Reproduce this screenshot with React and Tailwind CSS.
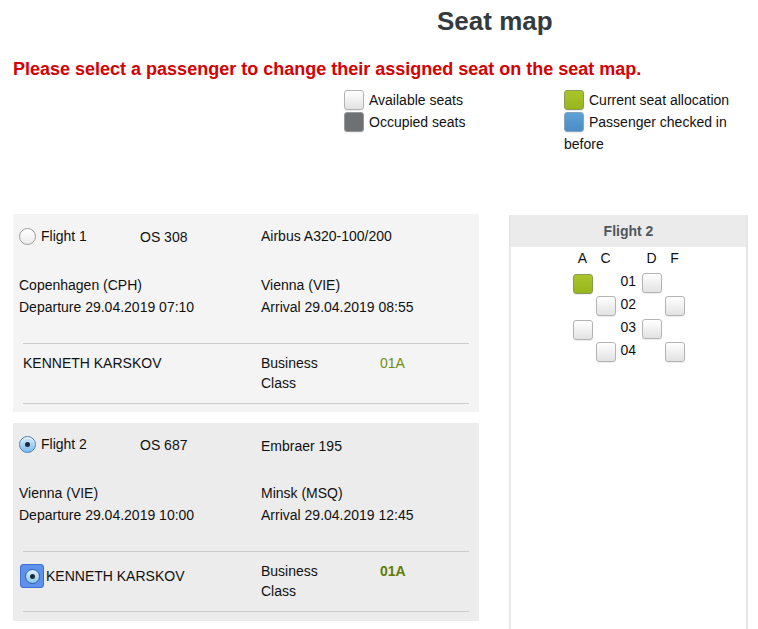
import React from "react";

const FONT = "font-['Liberation_Sans',Arial,sans-serif]";

function Radio({ checked }) {
  if (checked) {
    return (
      <span className="relative inline-flex h-[17px] w-[17px] shrink-0 items-center justify-center rounded-full border border-[#4d7fb3] bg-[linear-gradient(#d6ecfb,#7cbcec)] shadow-[inset_0_1px_1px_rgba(255,255,255,0.8)]">
        <span className="h-[5px] w-[5px] rounded-full bg-[#1d2a36]" />
      </span>
    );
  }
  return (
    <span className="inline-block h-[17px] w-[17px] shrink-0 rounded-full border border-[#9c9c9c] bg-[linear-gradient(#ffffff,#ececec)]" />
  );
}

function PaxIcon() {
  return (
    <span className="inline-flex h-[24px] w-[24px] shrink-0 items-center justify-center rounded-[3px] border border-[#3d6fd6] bg-[#5e90ee]">
      <span className="inline-flex h-[15px] w-[15px] items-center justify-center rounded-full border border-[#2f5f9e] bg-[linear-gradient(#e2f1fc,#8cc6f0)]">
        <span className="h-[5px] w-[5px] rounded-full bg-[#1d2a36]" />
      </span>
    </span>
  );
}

function Seat({ type, className = "" }) {
  const base = "h-[20px] w-[20px] rounded-[3px] border shadow-[0_1px_1px_rgba(0,0,0,0.08)] ";
  if (type === "current")
    return <div className={base + "border-[#8a9b57] bg-[linear-gradient(#a9c52a,#98b51c)] " + className} />;
  if (type === "occupied")
    return <div className={base + "border-[#9a9a9a] bg-[#6d7173] " + className} />;
  if (type === "checked")
    return <div className={base + "border-[#8aa2b8] bg-[linear-gradient(#5ea2d8,#4a8cc4)] " + className} />;
  return <div className={base + "border-[#b3b3b3] bg-[linear-gradient(#ffffff,#e2e2e2)] " + className} />;
}

function LegendItem({ type, children }) {
  return (
    <div className="leading-[22px]">
      <span className="mr-[5px] inline-block align-middle">
        <Seat type={type} className="-mt-[2px]" />
      </span>
      {children}
    </div>
  );
}

function FlightCard({ selected, bg, flight, number, aircraft, from, dep, to, arr }) {
  return (
    <div className={bg + (selected ? " pt-[11px] pb-[9px]" : " pt-[12px] pb-[8px]")}>
      <div className="flex h-[20px] items-center pl-[6px]">
        <div className="flex w-[121px] items-center gap-[5px]">
          <Radio checked={selected} />
          <span>{flight}</span>
        </div>
        <div className="w-[121px] pt-[2px]">{number}</div>
        <div className={selected ? "pt-[4px]" : "pt-[1px]"}>{aircraft}</div>
      </div>
      <div className="mt-[28px] flex pl-[6px] leading-[22px]">
        <div className="w-[242px]">
          <div>{from}</div>
          <div>{dep}</div>
        </div>
        <div>
          <div>{to}</div>
          <div>{arr}</div>
        </div>
      </div>
      <div className="mx-[10px] mt-[25px] border-y border-[#cbcbcb] pt-[9px] pb-[10px]">
        <div className="flex leading-[20px]">
          <div className="w-[238px]">
            {selected ? (
              <div className="-ml-[3px] mt-[3px] flex items-center gap-[2px]">
                <PaxIcon />
                <span>KENNETH KARSKOV</span>
              </div>
            ) : (
              <div>KENNETH KARSKOV</div>
            )}
          </div>
          <div className="w-[119px]">
            <div>Business</div>
            <div>Class</div>
          </div>
          <div className={selected ? "font-bold text-[#5f7d06]" : "text-[#6f900f]"}>01A</div>
        </div>
      </div>
    </div>
  );
}

export default function App() {
  const rows = [
    { n: "01", seats: ["current", null, "free", null] },
    { n: "02", seats: [null, "free", null, "free"] },
    { n: "03", seats: ["free", null, "free", null] },
    { n: "04", seats: [null, "free", null, "free"] },
  ];
  return (
    <div className={FONT + " h-[629px] overflow-hidden bg-white text-[14px] text-[#111]"}>
      <div className="pt-[6px] pl-[437px] text-[26px] font-bold leading-[30px] text-[#333b41]">Seat map</div>
      <div className="mt-[22px] pl-[13px] text-[18px] font-bold leading-[22px] text-[#d70000]">
        Please select a passenger to change their assigned seat on the seat map.
      </div>
      <div className="mt-[9px] flex pl-[344px]">
        <div className="w-[220px]">
          <LegendItem type="free">Available seats</LegendItem>
          <LegendItem type="occupied">Occupied seats</LegendItem>
        </div>
        <div className="w-[170px]">
          <LegendItem type="current">Current seat allocation</LegendItem>
          <LegendItem type="checked">Passenger checked in before</LegendItem>
        </div>
      </div>
      <div className="mt-[59px] flex gap-[30px] pl-[13px]">
        <div className="flex w-[466px] flex-col gap-[11px]">
          <FlightCard
            bg="bg-[#f4f4f4]"
            flight="Flight 1"
            number="OS 308"
            aircraft="Airbus A320-100/200"
            from="Copenhagen (CPH)"
            dep="Departure 29.04.2019 07:10"
            to="Vienna (VIE)"
            arr="Arrival 29.04.2019 08:55"
          />
          <FlightCard
            selected
            bg="bg-[#ececec]"
            flight="Flight 2"
            number="OS 687"
            aircraft="Embraer 195"
            from="Vienna (VIE)"
            dep="Departure 29.04.2019 10:00"
            to="Minsk (MSQ)"
            arr="Arrival 29.04.2019 12:45"
          />
        </div>
        <div className="mt-[1px] h-[430px] w-[239px] border-x-2 border-[#e6e6e6]">
          <div className="flex h-[32px] items-center justify-center bg-[#ebebeb] font-bold text-[#4f575d]">Flight 2</div>
          <div className="flex justify-center pt-[1px]">
            <div className="grid grid-cols-[23px_23px_23px_23px_20px]">
              {["A", "C", "", "D", "F"].map((h, i) => (
                <div key={i} className="h-[25px] w-[20px] pt-[2px] text-center leading-[16px]">{h}</div>
              ))}
              {rows.map((r) => (
                <React.Fragment key={r.n}>
                  <div className="h-[23px]">{r.seats[0] && <Seat type={r.seats[0]} className="mt-[1px]" />}</div>
                  <div className="h-[23px]">{r.seats[1] && <Seat type={r.seats[1]} className="mt-[0px]" />}</div>
                  <div className="h-[23px] pl-[2px] pt-[1px] leading-[15px]">{r.n}</div>
                  <div className="h-[23px]">{r.seats[2] && <Seat type={r.seats[2]} />}</div>
                  <div className="h-[23px]">{r.seats[3] && <Seat type={r.seats[3]} />}</div>
                </React.Fragment>
              ))}
            </div>
          </div>
        </div>
      </div>
    </div>
  );
}
